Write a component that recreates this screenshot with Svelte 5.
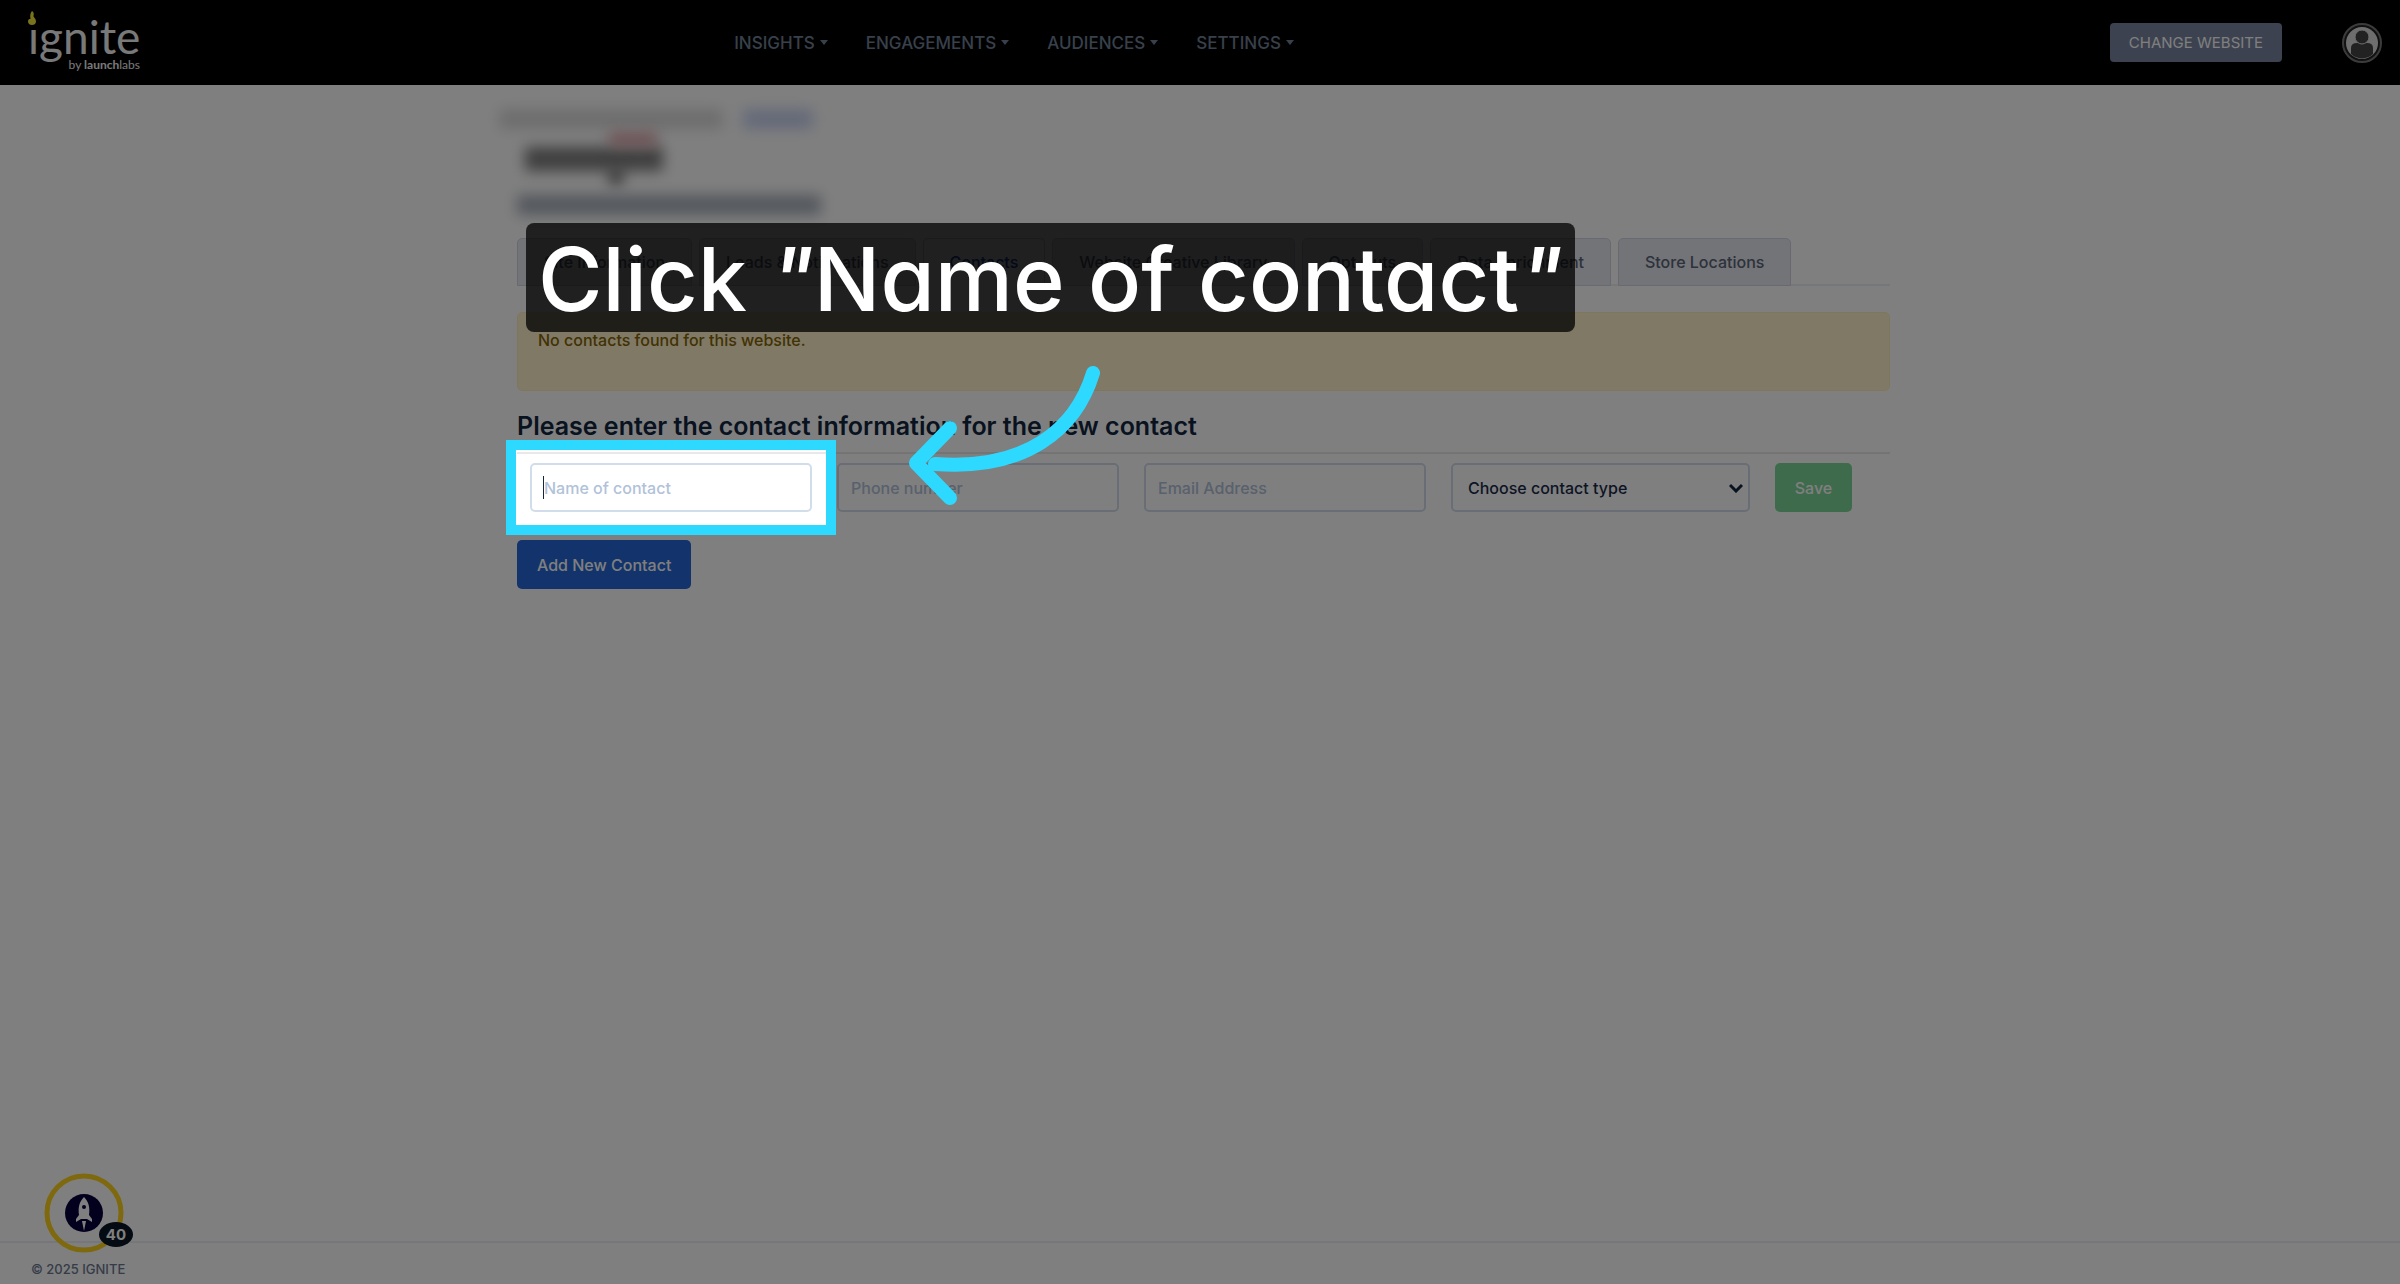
<script lang="ts">
  const menus = ['Insights', 'Engagements', 'Audiences', 'Settings'];
  const tabs = [
    'Site Information',
    'Leads & Notifications',
    'Contacts',
    'Website Creative Library',
    'Opt Outs',
    'Data Enrichment',
    'Store Locations',
  ];

  let activeTab = $state('Contacts');
  let name = $state('');
  let phone = $state('');
  let email = $state('');
  let type = $state('');
</script>

<div class="page">
  <header class="topbar">
    <a class="logo" href="#home" aria-label="ignite by launchlabs">
      <svg class="flame" viewBox="0 0 8 14" aria-hidden="true">
        <path d="M4 0C6 1 6 3 5.500 5C5.500 6.500 8 7.500 8 10.500C8 13 6 14 4 14S0 13 0 10.500C0 8.500 1 8 2.500 8C2 5 2 2 4 0Z" />
      </svg>
      <span class="brand">ıgnite</span>
      <span class="byline">by <b>launch</b>labs</span>
    </a>
    <nav class="menus">
      {#each menus as menu}
        <button class="menu" type="button">{menu}<span class="caret"></span></button>
      {/each}
    </nav>
    <div class="account">
      <button class="change" type="button">Change website</button>
      <button class="avatar" type="button" aria-label="Account">
        <svg viewBox="0 0 40 40" aria-hidden="true">
          <circle cx="20" cy="20" r="19" fill="#222" stroke="#777" stroke-width="2" />
          <circle cx="20" cy="20" r="16" fill="#ddd" />
          <path d="M9 31V25Q9 20 15 20H25Q31 20 31 25V31A16 16 0 0 1 9 31Z" fill="#444" />
          <circle cx="20" cy="14" r="7" fill="#444" stroke="#ddd" stroke-width="1" />
        </svg>
      </button>
    </div>
  </header>

  <main class="content">
    <div class="redacted" aria-hidden="true">
      <div class="crumbs"><span class="smudge trail"></span><span class="smudge link"></span></div>
      <div class="client"><span class="smudge mark"></span><span class="smudge accent"></span><span class="smudge tail"></span></div>
      <div class="smudge title"></div>
    </div>

    <div class="tabs" role="tablist">
      {#each tabs as tab}
        <button
          class="tab"
          class:active={activeTab === tab}
          type="button"
          role="tab"
          aria-selected={activeTab === tab}
          onclick={() => (activeTab = tab)}
        >{tab}</button>
      {/each}
    </div>

    <div class="alert">No contacts found for this website.</div>

    <h2>Please enter the contact information for the new contact</h2>

    <form class="contact-form" onsubmit={(e) => e.preventDefault()}>
      <div class="field target">
        <input bind:value={name} placeholder="Name of contact" aria-label="Name of contact" />
        <span class="cursor"></span>
        <div class="spotlight"></div>
        <svg class="arrow" viewBox="0 0 192 140" aria-hidden="true">
          <path d="M185 8C168 64 118 106 27 99M42 63L8 98L42 133" />
        </svg>
      </div>
      <div class="field">
        <input bind:value={phone} placeholder="Phone number" aria-label="Phone number" />
      </div>
      <div class="field">
        <input bind:value={email} placeholder="Email Address" aria-label="Email Address" />
      </div>
      <div class="field choice">
        <select bind:value={type} aria-label="Contact type">
          <option value="">Choose contact type</option>
        </select>
        <svg class="chevron" viewBox="0 0 14 10" aria-hidden="true"><path d="M1 2L7 8L13 2" /></svg>
      </div>
      <button class="save" type="submit">Save</button>
    </form>

    <button class="add" type="button">Add New Contact</button>

    <div class="callout">Click <i>"</i>Name of contact<i>"</i></div>
  </main>

  <footer>© 2025 IGNITE</footer>

  <button class="launcher" type="button" aria-label="Open checklist, 40 items">
    <svg viewBox="0 0 80 80" aria-hidden="true">
      <circle cx="40" cy="40" r="37" fill="none" stroke="#ffd21e" stroke-width="5" />
      <circle cx="40" cy="40" r="19" fill="#06003c" />
      <path d="M40 24C35 29 34 35 35 42L32 46V49L37 46H43L48 49V46L45 42C46 35 45 29 40 24Z" fill="#fff" />
      <circle cx="40" cy="34" r="2" fill="#06003c" />
      <path d="M38 48H42L40 58Z" fill="#fff" />
    </svg>
    <span class="count">40</span>
  </button>
</div>

<style>
  :global(body) { margin: 0; }
  .page {
    position: relative;
    display: flex;
    flex-direction: column;
    min-height: 100vh;
    overflow: hidden;
    background: #fff;
    color: #1a2b4a;
    font-family: Inter, sans-serif;
    font-size: 16px;
    font-weight: 500;
  }
  button, input, select { font: inherit; color: inherit; box-sizing: border-box; }
  button { padding: 0; border: 0; background: none; }

  .topbar {
    display: grid;
    grid-template-columns: 30% auto 1fr;
    align-items: center;
    height: 85px;
    padding: 0 18px 0 28px;
    box-sizing: border-box;
    background: #000;
  }
  .logo {
    position: relative;
    display: flex;
    flex-direction: column;
    justify-self: start;
    width: 112px;
    color: #f2f2f2;
    font-family: Lato, sans-serif;
    font-weight: 400;
    text-decoration: none;
  }
  .flame { position: absolute; left: 0; top: -4px; width: 8px; height: 14px; fill: #f2e63a; }
  .brand { font-size: 46px; line-height: 44px; }
  .byline { align-self: flex-end; font-size: 12px; line-height: 12px; }
  .menus { display: flex; gap: 38px; }
  .menu {
    display: flex;
    align-items: center;
    gap: 5px;
    color: #718096;
    font-size: 17px;
    text-transform: uppercase;
  }
  .caret { border: 4px solid transparent; border-top: 5px solid; border-bottom: 0; }
  .account { display: flex; align-items: center; justify-self: end; gap: 60px; }
  .change {
    height: 39px;
    padding: 0 19px;
    border-radius: 4px;
    background: #7885a0;
    color: #fff;
    font-size: 15px;
    font-weight: 400;
    text-transform: uppercase;
  }
  .avatar { width: 40px; height: 40px; }
  .avatar svg { display: block; }

  .content {
    position: relative;
    width: calc(100% - 1027px);
    min-width: 1373px;
    margin: 0 auto;
    padding-left: 7px;
    flex: 1;
  }
  .redacted { height: 153px; padding-top: 24px; box-sizing: border-box; }
  .smudge { display: block; filter: blur(7px); }
  .crumbs { display: flex; gap: 20px; margin-left: -18px; }
  .trail { width: 224px; height: 20px; background: #dcdcdc; }
  .link { width: 70px; height: 20px; background: #c9d4f2; }
  .client { position: relative; margin: 18px 0 0 8px; }
  .mark { width: 138px; height: 24px; background: #808080; }
  .accent { position: absolute; left: 84px; top: -14px; width: 48px; height: 12px; background: #d99aa0; }
  .tail { position: absolute; left: 84px; top: 20px; width: 14px; height: 18px; background: #777; }
  .title { width: 304px; height: 20px; margin-top: 24px; background: #a9b0bb; }

  .tabs { display: flex; gap: 7px; border-bottom: 2px solid #eceef2; }
  .tab {
    height: 48px;
    margin-bottom: -2px;
    padding: 0 26px;
    border: 1px solid #d3d5e2;
    border-radius: 5px 5px 0 0;
    background: #e6e8ef;
    color: #5a6478;
  }
  .tab.active { border-bottom-color: #fff; background: #fff; color: #1c4fc0; }
  .alert {
    height: 79px;
    margin-top: 26px;
    padding: 17px 20px 0;
    box-sizing: border-box;
    border: 1px solid #ffeeba;
    border-radius: 5px;
    background: #fff3cd;
    color: #856404;
    line-height: 20px;
  }
  h2 {
    margin: 19px 0 0;
    padding-bottom: 10px;
    border-bottom: 2px solid #e8e8ea;
    color: #12263f;
    font-size: 25px;
    font-weight: 600;
    line-height: 32px;
  }
  .contact-form {
    display: grid;
    grid-template-columns: 282fr 282fr 282fr 299fr 77fr;
    gap: 25px;
    padding: 9px 38px 0 13px;
  }
  .field { position: relative; }
  .field input, .field select {
    display: block;
    width: 100%;
    height: 49px;
    padding: 0 12px;
    border: 2px solid #d2ddec;
    border-radius: 5px;
    outline: 0;
    background: #fff;
  }
  .field input::placeholder { color: #b1c2d9; opacity: 1; }
  .field select { padding: 0 15px; appearance: none; }
  .chevron {
    position: absolute;
    right: 7px;
    top: 20px;
    width: 14px;
    height: 10px;
    fill: none;
    stroke: #12263f;
    stroke-width: 3;
    pointer-events: none;
  }
  .cursor { position: absolute; left: 13px; top: 13px; width: 1px; height: 23px; background: #12263f; }
  .save { height: 49px; border-radius: 5px; background: #7ed69a; color: #fff; }
  .add {
    height: 49px;
    margin-top: 28px;
    padding: 0 20px;
    border-radius: 5px;
    background: #2466d6;
    color: #fff;
  }

  /* everything outside the spotlight is dimmed by its own shadow */
  .spotlight {
    position: absolute;
    z-index: 2;
    inset: -13px -14px;
    outline: 10px solid #2ed9ff;
    box-shadow: 0 0 0 9999px rgba(0, 0, 0, 0.5);
    pointer-events: none;
  }
  .arrow {
    position: absolute;
    z-index: 4;
    left: 378px;
    top: -98px;
    width: 192px;
    height: 140px;
    fill: none;
    stroke: #2ed9ff;
    stroke-width: 14;
    stroke-linecap: round;
    stroke-linejoin: round;
    pointer-events: none;
  }
  .callout {
    position: absolute;
    z-index: 3;
    left: 16px;
    top: 138px;
    padding: 4px 12px 0;
    border-radius: 8px;
    background: rgba(0, 0, 0, 0.75);
    color: #fff;
    font-size: 88px;
    font-feature-settings: 'cv11';
    line-height: 105px;
    white-space: nowrap;
  }

  footer {
    height: 43px;
    padding: 18px 31px 0;
    box-sizing: border-box;
    border-top: 2px solid #eceef5;
    color: #6b7890;
    font-size: 13px;
    line-height: 16px;
  }
  .launcher { position: absolute; left: 44px; bottom: 31px; width: 80px; height: 80px; }
  .launcher svg { display: block; }
  .count {
    position: absolute;
    right: -9px;
    bottom: 6px;
    width: 34px;
    border-radius: 50%;
    background: #0b1626;
    color: #fff;
    font-size: 15px;
    font-weight: 700;
    line-height: 25px;
  }
</style>
